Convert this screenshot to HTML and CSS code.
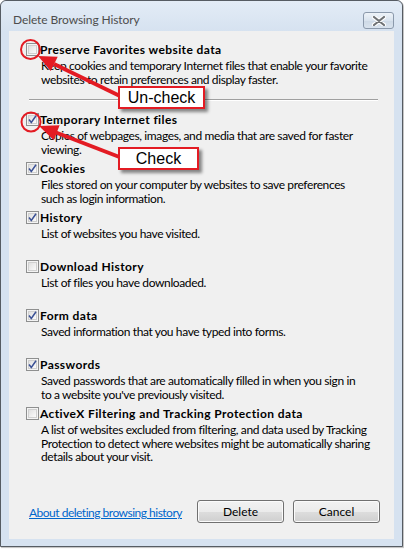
FILE: index.html
```html
<!DOCTYPE html>
<html>
<head>
<meta charset="utf-8">
<link rel="stylesheet" href="styles.css">
</head>
<body>
<div class="window">
  <div class="titlebar">
    <span class="title">Delete Browsing History</span>
    <span class="close">
      <svg width="14" height="10" viewBox="0 0 14 10"><path d="M2 1 L12 9 M12 1 L2 9" stroke="#fff" stroke-width="4.2" stroke-linecap="round"/><path d="M2 1 L12 9 M12 1 L2 9" stroke="#6f7275" stroke-width="2.2" stroke-linecap="round"/></svg>
    </span>
  </div>
  <div class="content">
    <div class="item first">
      <div class="row"><span class="cb"></span><span class="label">Preserve Favorites website data</span></div>
      <div class="desc">Keep cookies and temporary Internet files that enable your favorite<br>websites to retain preferences and display faster.</div>
    </div>
    <div class="sep"></div>
    <div class="item">
      <div class="row"><span class="cb on"><svg width="9" height="9" viewBox="0 0 9 9"><path d="M1 4.5 L3.3 7.5 L8 0.8" fill="none" stroke="#3b5195" stroke-width="1.5"/></svg></span><span class="label">Temporary Internet files</span></div>
      <div class="desc">Copies of webpages, images, and media that are saved for faster<br>viewing.</div>
    </div>
    <div class="item">
      <div class="row"><span class="cb on"><svg width="9" height="9" viewBox="0 0 9 9"><path d="M1 4.5 L3.3 7.5 L8 0.8" fill="none" stroke="#3b5195" stroke-width="1.5"/></svg></span><span class="label">Cookies</span></div>
      <div class="desc">Files stored on your computer by websites to save preferences<br>such as login information.</div>
    </div>
    <div class="item">
      <div class="row"><span class="cb on"><svg width="9" height="9" viewBox="0 0 9 9"><path d="M1 4.5 L3.3 7.5 L8 0.8" fill="none" stroke="#3b5195" stroke-width="1.5"/></svg></span><span class="label">History</span></div>
      <div class="desc">List of websites you have visited.</div>
    </div>
    <div class="item">
      <div class="row"><span class="cb"></span><span class="label">Download History</span></div>
      <div class="desc">List of files you have downloaded.</div>
    </div>
    <div class="item">
      <div class="row"><span class="cb on"><svg width="9" height="9" viewBox="0 0 9 9"><path d="M1 4.5 L3.3 7.5 L8 0.8" fill="none" stroke="#3b5195" stroke-width="1.5"/></svg></span><span class="label">Form data</span></div>
      <div class="desc">Saved information that you have typed into forms.</div>
    </div>
    <div class="item">
      <div class="row"><span class="cb on"><svg width="9" height="9" viewBox="0 0 9 9"><path d="M1 4.5 L3.3 7.5 L8 0.8" fill="none" stroke="#3b5195" stroke-width="1.5"/></svg></span><span class="label">Passwords</span></div>
      <div class="desc">Saved passwords that are automatically filled in when you sign in<br>to a website you've previously visited.</div>
    </div>
    <div class="item">
      <div class="row"><span class="cb"></span><span class="label">ActiveX Filtering and Tracking Protection data</span></div>
      <div class="desc">A list of websites excluded from filtering, and data used by Tracking<br>Protection to detect where websites might be automatically sharing<br>details about your visit.</div>
    </div>
    <div class="footer">
      <a class="link" href="#">About deleting browsing history</a>
      <span class="btn">Delete</span>
      <span class="btn">Cancel</span>
    </div>
  </div>
</div>
<svg class="annot" width="404" height="549" viewBox="0 0 404 549">
  <circle cx="30.5" cy="49.5" r="9.5" fill="none" stroke="#e31b23" stroke-width="2"/>
  <circle cx="31" cy="122" r="9.5" fill="none" stroke="#e31b23" stroke-width="2"/>
  <line x1="54" y1="64" x2="122" y2="97" stroke="#e31b23" stroke-width="4"/>
  <polygon points="38,56 50.7,71.1 57.7,56.7" fill="#e31b23"/>
  <line x1="56" y1="132.5" x2="122" y2="158" stroke="#e31b23" stroke-width="4"/>
  <polygon points="39,126 53.8,140.3 59.6,125.3" fill="#e31b23"/>
</svg>
<div class="callout c1">Un-check</div>
<div class="callout c2">Check</div>
</body>
</html>
```
FILE: styles.css
```css
html, body {
  margin: 0;
  padding: 0;
  background: #ffffff;
}
body {
  width: 404px;
  height: 549px;
  position: relative;
  overflow: hidden;
  font-family: Lato, "Liberation Sans", sans-serif;
  font-size: 12px;
  color: #000;
}
.window {
  box-sizing: border-box;
  width: 403px;
  height: 547px;
  border: 1px solid #565c63;
  border-radius: 6px 6px 0 0;
  background: #d6e2f0;
  display: flex;
  flex-direction: column;
  box-shadow: 1px 1px 1px rgba(0,0,0,0.25);
}
.titlebar {
  height: 30px;
  display: flex;
  justify-content: space-between;
  align-items: flex-start;
  background: linear-gradient(#e3ecf6, #d6e2f0);
  border-radius: 6px 6px 0 0;
}
.title {
  margin: 11px 0 0 12px;
  line-height: 16px;
  color: #4d4d4d;
  letter-spacing: -0.1px;
}
.close {
  box-sizing: border-box;
  margin: 11px 8px 0 0;
  width: 31px;
  height: 17px;
  border: 1px solid #8b99ab;
  border-radius: 3px;
  background: linear-gradient(#eef3f8, #d9e3ee 50%, #cdd9e6 51%, #d9e3ee);
  display: flex;
  align-items: center;
  justify-content: center;
}
.content {
  box-sizing: border-box;
  margin: 0 8px 7px 8px;
  flex: 1;
  background: #f0f0f0;
  padding: 11px 0 0 17px;
  display: flex;
  flex-direction: column;
}
.item {
  height: 49px;
  flex: none;
}
.item.first {
  height: auto;
}
.row {
  display: flex;
  align-items: center;
  height: 15px;
}
.cb {
  box-sizing: border-box;
  width: 13px;
  height: 13px;
  border: 1px solid #8e8f8f;
  background: linear-gradient(135deg, #d8d8d8, #f6f6f6 70%, #ffffff);
  box-shadow: inset 0 0 0 1px #f4f4f4, inset 0 0 0 2px #d0d0d0;
  display: flex;
  align-items: center;
  justify-content: center;
  margin-right: 1px;
}
.cb svg {
  display: block;
}
.label {
  font-weight: bold;
  white-space: nowrap;
  line-height: 15px;
  letter-spacing: 0.4px;
}
.desc {
  margin-top: 2px;
  padding-left: 15px;
  line-height: 13.5px;
  white-space: nowrap;
  letter-spacing: -0.38px;
}
.sep {
  flex: none;
  margin: 13px 16px 11px 3px;
  height: 1px;
  background: #a0a0a0;
  border-bottom: 1px solid #ffffff;
}
.footer {
  margin-top: auto;
  display: flex;
  align-items: center;
  padding: 0 14px 16px 3px;
}
.link {
  color: #0066cc;
  text-decoration: underline;
  margin-right: auto;
  margin-top: 2px;
  white-space: nowrap;
  letter-spacing: -0.5px;
}
.btn {
  box-sizing: border-box;
  width: 87px;
  height: 23px;
  margin-left: 9px;
  border: 1px solid #707070;
  border-radius: 3px;
  background: linear-gradient(#f2f2f2, #ebebeb 50%, #dddddd 51%, #cfcfcf);
  box-shadow: inset 0 0 0 1px #fbfbfb;
  display: flex;
  align-items: center;
  justify-content: center;
  line-height: 15px;
}
.annot {
  position: absolute;
  left: 0;
  top: 0;
  pointer-events: none;
}
.callout {
  position: absolute;
  box-sizing: border-box;
  background: #ffffff;
  border: 2px solid #e31b23;
  box-shadow: 3px 3px 3px rgba(0,0,0,0.45);
  font-family: "Liberation Sans", Arial, sans-serif;
  font-size: 16px;
  line-height: 20px;
  text-align: center;
  color: #000;
}
.c1 {
  left: 118px;
  top: 86px;
  width: 87px;
  height: 23px;
}
.c2 {
  left: 118px;
  top: 147px;
  width: 81px;
  height: 23px;
}
```
